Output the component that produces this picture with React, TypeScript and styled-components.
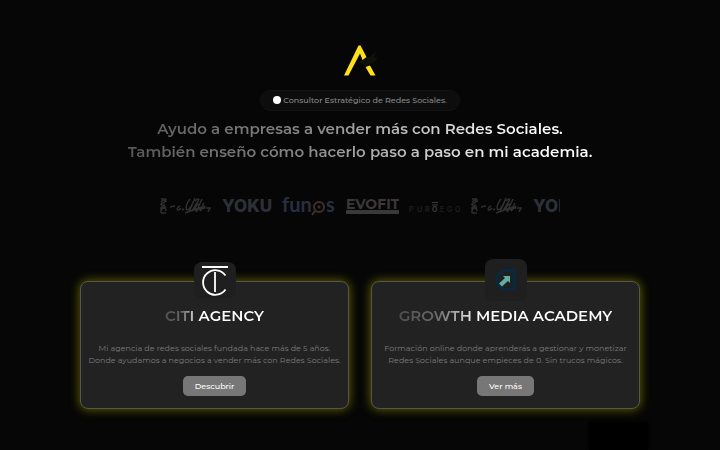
import styled, { createGlobalStyle } from 'styled-components';

const GlobalStyle = createGlobalStyle`
  * {
    box-sizing: border-box;
  }

  body {
    margin: 0;
    background: #060606;
    font-family: Montserrat, Inter, 'Open Sans', sans-serif;
    overflow: hidden;
  }
`;

const Page = styled.main`
  display: flex;
  flex-direction: column;
  align-items: center;
  padding: 44px 80px 40px;
  color: #fff;
`;

const Brand = styled.a`
  display: flex;
  height: 32px;
`;

const Pill = styled.p`
  display: flex;
  align-items: center;
  gap: 2px;
  height: 21px;
  margin: 14px 0 0;
  padding: 0 12px 2px;
  border: 1px solid #131313;
  border-radius: 11px;
  background: #0d0d0d;
  color: #8a8a8a;
  font-size: 8px;
  font-weight: 500;
  line-height: 12px;
  white-space: nowrap;
`;

const Dot = styled.span`
  width: 8px;
  height: 8px;
  border-radius: 50%;
  background: #fff;
`;

const Headline = styled.h1`
  margin: 6px 0 0;
  font-size: 15px;
  font-weight: 600;
  line-height: 23px;
  text-align: center;
  white-space: nowrap;
  background: linear-gradient(90deg, #585858 0%, #8a8a8a 40%, #fff 85%);
  -webkit-background-clip: text;
  background-clip: text;
  -webkit-text-fill-color: transparent;
`;

const Clients = styled.ul`
  display: flex;
  align-items: center;
  gap: 10px;
  width: 100%;
  max-width: 400px;
  height: 32px;
  margin: 27px 0 0;
  padding: 0;
  overflow: hidden;
  list-style: none;
`;

const Client = styled.li`
  display: flex;
  flex: none;
  align-items: center;
`;

const Yoku = styled.span`
  color: #2e3039;
  font-family: Inter, sans-serif;
  font-size: 17px;
  font-weight: 800;
  line-height: 22px;
`;

const Cards = styled.section`
  display: grid;
  grid-template-columns: 1fr 1fr;
  gap: 22px;
  width: 100%;
  margin-top: 59px;
`;

const Card = styled.article`
  position: relative;
  display: flex;
  flex-direction: column;
  align-items: center;
  padding: 23px 0 12px;
  border: 1px solid #56564a;
  border-radius: 8px;
  background: #222;
  box-shadow: 0 0 10px 1px #5a5a00;
`;

const Badge = styled.span<{ $tall?: boolean }>`
  position: absolute;
  top: ${props => props.$tall ? '-23px' : '-20px'};
  left: 50%;
  display: flex;
  align-items: center;
  justify-content: center;
  width: 42px;
  height: ${props => props.$tall ? '42px' : '36px'};
  border-radius: 8px;
  background: #1f1f1f;
  transform: translateX(-50%);
`;

const CardTitle = styled.h2<{ $fade: string }>`
  margin: 0;
  font-size: 15px;
  font-weight: 600;
  line-height: 22px;
  white-space: nowrap;
  background: linear-gradient(90deg, #505050 0%, #6a6a6a 18%, #fff ${props => props.$fade});
  -webkit-background-clip: text;
  background-clip: text;
  -webkit-text-fill-color: transparent;
`;

const CardText = styled.p`
  margin: 15px 0 10px;
  color: #7c7c7c;
  font-size: 8px;
  line-height: 12px;
  text-align: center;
  white-space: nowrap;
`;

const CardButton = styled.button`
  height: 20px;
  padding: 0 12px;
  border: 0;
  border-radius: 5px;
  background: #777;
  color: #fff;
  font-family: inherit;
  font-size: 8px;
  font-weight: 500;
  line-height: 20px;
  cursor: pointer;
`;

const Corner = styled.aside`
  position: fixed;
  right: 72px;
  bottom: 0;
  width: 59px;
  height: 28px;
  background: #000;
  box-shadow: 0 0 3px #000;
`;

const BrandMark = () => (
  <svg width="34" height="32" viewBox="0 0 34 32" role="img" aria-label="A">
    <path d="M16 18l6-5 5 0 6-6-2 7 5-1-6 6-8 3z" fill="#10100b" />
    <path d="M1 31.500L15.500 1.500h2L23.500 13l-4 3L17 9.500 5.500 31.500z" fill="#ffe11b" />
    <path d="M22.500 23l4.500-1.500 5.500 10h-5z" fill="#ffe11b" />
  </svg>
);

const Script = () => (
  <svg width="52" height="20" viewBox="0 0 52 20" fill="none" stroke="#303030" aria-hidden="true">
    <path d="M1 3h5M1 6c3-3 6 0 2 1s-2 3 2 2M1 11h5M1 15c1-4 5-4 5 0M1 17h5M6 3v3M1 11v6" strokeWidth="1.400" />
    <path d="M10 11l5-1M20 10c-3 1-4 5-1 4l2-2M22 14l2-1" strokeWidth="1.400" />
    <path d="M30 3c-3 3-5 9-3 11 3 0 6-7 8-12l-6 14M35 5c3-3 5-2 3 0l-6 10M39 8c-4 1-5 6-3 6M42 3l-6 13c2-3 4-5 4-3s0 2 3-2M44 7l-4 8 5-5-1 3M25 17l17-6M46 12h4l-2 4" strokeWidth="1.500" />
  </svg>
);

const Funos = () => (
  <svg width="54" height="32" viewBox="0 0 54 32" role="img" aria-label="funos">
    <text x="0" y="22" fill="#2b2d42" fontFamily="Lato, sans-serif" fontSize="20" fontWeight="700">fun</text>
    <circle cx="37" cy="17" r="5" fill="none" stroke="#432d2b" strokeWidth="2" />
    <circle cx="37" cy="17" r="1.500" fill="#432d2b" />
    <path d="M33 21l-3 4" stroke="#432d2b" strokeWidth="2" />
    <text x="44" y="22" fill="#2b2d42" fontFamily="Lato, sans-serif" fontSize="20" fontWeight="700">s</text>
  </svg>
);

const Evofit = () => (
  <svg width="53" height="28" viewBox="0 0 53 28" role="img" aria-label="EVOFIT">
    <text x="0" y="17" fill="#3a3838" fontFamily="Montserrat, Inter, sans-serif" fontSize="14" fontWeight="700">EVOFIT</text>
    <path d="M0 20h53" stroke="#3a3838" strokeWidth="4" />
  </svg>
);

const Puroego = () => (
  <svg width="52" height="18" viewBox="0 0 52 18" role="img" aria-label="PUROEGO" fill="#2a2a2a" fontFamily="Inter, sans-serif" fontSize="7">
    <text x="0" y="15">P</text>
    <text x="8" y="15">U</text>
    <text x="16" y="15">R</text>
    <text x="23" y="15" fill="#3c3c3c" fontWeight="700">O</text>
    <path d="M23 5.500h6M23 8h6" stroke="#3c3c3c" />
    <text x="31" y="15">E</text>
    <text x="38" y="15">G</text>
    <text x="46" y="15">O</text>
  </svg>
);

const CitiMark = () => (
  <svg width="30" height="34" viewBox="0 0 30 34" fill="none" stroke="#fff" strokeWidth="1.800" aria-hidden="true">
    <path d="M2 4h26M15 9v20M25.500 12.500a12.300 12.300 0 1 0 0 14" />
  </svg>
);

const GrowthMark = () => (
  <svg width="24" height="26" viewBox="0 0 24 26" aria-hidden="true">
    <path d="M20 2v21M20 5c-8-4-17 0-17 8s9 12 17 7" fill="none" stroke="#0a283f" strokeWidth="3" />
    <path d="M5 16.500l6-5.500-2-2h7v7l-2-2-6 5.500z" fill="#62ad9f" />
  </svg>
);

const clients = [
  { id: 'script', logo: <Script /> },
  { id: 'yoku', logo: <Yoku>YOKU</Yoku> },
  { id: 'funos', logo: <Funos /> },
  { id: 'evofit', logo: <Evofit /> },
  { id: 'puroego', logo: <Puroego /> },
];

const App = () => {
  return (
    <>
      <GlobalStyle />
      <Page>
        <Brand href="#" aria-label="Inicio">
          <BrandMark />
        </Brand>
        <Pill>
          <Dot />
          Consultor Estratégico de Redes Sociales.
        </Pill>
        <Headline>
          Ayudo a empresas a vender más con Redes Sociales.
          <br />
          También enseño cómo hacerlo paso a paso en mi academia.
        </Headline>
        <Clients>
          {[...clients, ...clients.slice(0, 2)].map((client, index) => (
            <Client key={`${client.id}-${index}`}>{client.logo}</Client>
          ))}
        </Clients>
        <Cards>
          <Card>
            <Badge>
              <CitiMark />
            </Badge>
            <CardTitle $fade="34%">CITI AGENCY</CardTitle>
            <CardText>
              Mi agencia de redes sociales fundada hace más de 5 años.
              <br />
              Donde ayudamos a negocios a vender más con Redes Sociales.
            </CardText>
            <CardButton type="button">Descubrir</CardButton>
          </Card>
          <Card>
            <Badge $tall>
              <GrowthMark />
            </Badge>
            <CardTitle $fade="38%">GROWTH MEDIA ACADEMY</CardTitle>
            <CardText>
              Formación online donde aprenderás a gestionar y monetizar
              <br />
              Redes Sociales aunque empieces de 0. Sin trucos mágicos.
            </CardText>
            <CardButton type="button">Ver más</CardButton>
          </Card>
        </Cards>
      </Page>
      <Corner />
    </>
  );
};

export default App;
